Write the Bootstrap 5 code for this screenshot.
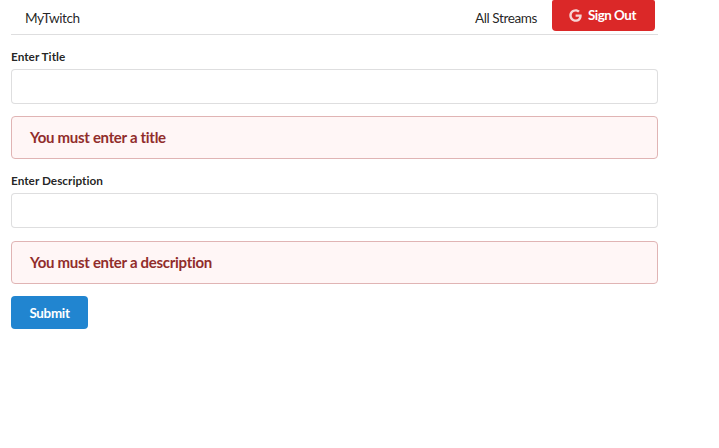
<!DOCTYPE html>
<html lang="en">
<head>
<meta charset="utf-8">
<meta name="viewport" content="width=device-width, initial-scale=1">
<title>MyTwitch</title>
<link href="https://cdn.jsdelivr.net/npm/bootstrap@5.3.0/dist/css/bootstrap.min.css" rel="stylesheet">
<style>
body { font-family: Lato, "Liberation Sans", sans-serif; font-size: 13.6px; line-height: 1.4285; color: rgba(0,0,0,.87); font-variant-ligatures: none; }
.page { width: 647px; margin-left: 11px; }
.topbar { height: 35px; margin-bottom: 14px; border-bottom: 1px solid rgba(34,36,38,.15); letter-spacing: -.42px; }
.topbar a { color: inherit; text-decoration: none; padding-top: 4px; }
.topbar .brand { margin-left: 14px; }
.topbar .streams { margin-right: 15px; }
.topbar .btn { --bs-btn-color: #fff; --bs-btn-bg: #db2828; --bs-btn-hover-bg: #d01919; height: 31px; width: 103px; margin-right: 3px; padding-left: 17px; border-top-left-radius: 2px; border-top-right-radius: 2px; }
.topbar .btn svg { margin-right: 6px; }
.btn { --bs-btn-font-size: 13.4px; --bs-btn-font-weight: 700; --bs-btn-border-width: 0; --bs-btn-border-radius: 4px; --bs-btn-padding-x: 0; --bs-btn-padding-y: 0; letter-spacing: -.5px; }
.form-label { font-size: 11.8px; font-weight: 700; line-height: 16px; margin-bottom: 4px; letter-spacing: .01px; }
.form-control { height: 35px; border-color: rgba(34,36,38,.15); border-radius: 4px; }
.alert { height: 43px; margin: 12px 0 14px; padding: 0 18px; border: 1px solid #e0b4b4; border-radius: 4px; background: #fff6f6; color: #912d2b; font-size: 15px; font-weight: 700; letter-spacing: -.3px; }
.alert-last { margin: 13px 0 12px; }
.submit { --bs-btn-bg: #2185d0; --bs-btn-hover-bg: #1678c2; width: 77px; height: 33px; padding-top: 2px; letter-spacing: -.3px; }
</style>
</head>
<body>
<div class="page">
  <nav class="topbar d-flex align-items-center">
    <a href="#" class="brand">MyTwitch</a>
    <a href="#" class="streams ms-auto">All Streams</a>
    <button type="button" class="btn btn-danger align-self-start d-flex align-items-center">
      <svg width="13" height="13" viewBox="0 0 488 512" fill="currentColor" opacity=".8" aria-hidden="true"><path d="M488 261.8C488 403.3 391.1 504 248 504 110.800 504 0 393.200 0 256S110.800 8 248 8c66.800 0 123 24.500 166.300 64.900l-67.500 64.900C258.500 52.600 94.300 116.600 94.300 256c0 86.500 69.100 156.600 153.700 156.600 98.200 0 135-70.400 140.800-106.900H248v-85.300h236.100c2.300 12.700 3.900 24.900 3.900 41.400z"/></svg>
      Sign Out
    </button>
  </nav>
  <form>
    <label class="form-label d-block" for="title">Enter Title</label>
    <input id="title" class="form-control" type="text">
    <div class="alert d-flex align-items-center">You must enter a title</div>
    <label class="form-label d-block" for="description">Enter Description</label>
    <input id="description" class="form-control" type="text">
    <div class="alert alert-last d-flex align-items-center">You must enter a description</div>
    <button type="button" class="btn btn-primary submit">Submit</button>
  </form>
</div>
<script src="https://cdn.jsdelivr.net/npm/bootstrap@5.3.0/dist/js/bootstrap.bundle.min.js"></script>
</body>
</html>
